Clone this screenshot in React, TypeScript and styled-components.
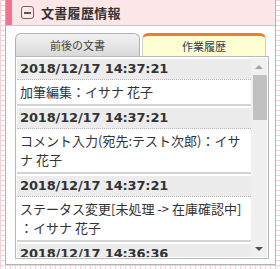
import { createGlobalStyle, styled } from "styled-components";

const GlobalStyle = createGlobalStyle`
  html, body {
    margin: 0;
    padding: 0;
  }
  body {
    padding-left: 5px;
    width: 280px;
    height: 269px;
    box-sizing: border-box;
    overflow: hidden;
    background-color: #fff;
    background-image:
      linear-gradient(to right, #f7cfd7 1px, transparent 1px),
      linear-gradient(to bottom, #f7cfd7 1px, transparent 1px);
    background-size: 5px 5px;
    font-family: "DejaVu Sans", "Noto Sans CJK JP", sans-serif;
    color: #333;
  }
`;

const Panel = styled.div`
  box-sizing: border-box;
  width: 271px;
  height: 265px;
  background: #fff;
  border: 1px solid #b4b4b4;
  border-top: 0;
  display: flex;
  flex-direction: column;
`;

const Header = styled.div`
  display: flex;
  align-items: center;
  height: 25px;
  background: #fde6e7;
  border-bottom: 1px solid #c8c8c8;
`;

const Bar = styled.div`
  align-self: stretch;
  width: 6px;
  background: #f2728f;
`;

const ToggleIcon = styled.span`
  box-sizing: border-box;
  width: 13px;
  height: 13px;
  margin-left: 9px;
  border: 1px solid #666;
  border-radius: 3px;
  display: flex;
  align-items: center;
  justify-content: center;

  &::after {
    content: "";
    width: 7px;
    height: 2px;
    background: #555;
  }
`;

const Title = styled.h2`
  margin: 0 0 0 7px;
  font-family: "Noto Sans CJK JP", sans-serif;
  font-size: 13px;
  font-weight: bold;
  letter-spacing: 0.3px;
  color: #333;
`;

const Body = styled.div`
  flex: 1;
  min-height: 0;
  display: flex;
  flex-direction: column;
  padding: 7px 6px 5px 9px;
`;

const Tabs = styled.div`
  display: flex;
  gap: 2px;
  height: 23px;
`;

const Tab = styled.div<{ $active?: boolean }>`
  box-sizing: border-box;
  width: ${(p) => (p.$active ? 124 : 125)}px;
  display: flex;
  align-items: center;
  justify-content: center;
  font-family: "Noto Sans CJK JP", sans-serif;
  font-size: 11px;
  border-radius: 6px 6px 0 0;
  border: 1px solid ${(p) => (p.$active ? "#d0d0c0" : "#b0b0b0")};
  border-bottom: 0;
  border-top: ${(p) => (p.$active ? "3px solid #f27a32" : "1px solid #b0b0b0")};
  background: ${(p) =>
    p.$active ? "#fffed2" : "linear-gradient(#f2f2f2, #d9d9d9)"};
  color: ${(p) => (p.$active ? "#2f3f55" : "#444")};
`;

const Box = styled.div`
  flex: 1;
  min-height: 0;
  display: flex;
  border: 1px solid #b8b8b8;
  padding: 1px;
  background: #fff;
`;

const List = styled.div`
  flex: 1;
  min-width: 0;
  overflow: hidden;
  padding-top: 1px;
`;

const Entry = styled.div`
  border-bottom: 2px solid #d4d4d4;
  margin-bottom: 2px;
`;

const Stamp = styled.div`
  height: 20px;
  line-height: 20px;
  padding-left: 3px;
  background: #ececec;
  border-bottom: 1px dotted #b8b8b8;
  font-size: 13px;
  font-weight: bold;
  letter-spacing: -0.15px;
  color: #333;
`;

const Note = styled.div`
  padding: 2px 2px 3px 3px;
  line-height: 19px;
  font-family: "Noto Sans CJK JP", sans-serif;
  font-size: 13px;
  line-break: anywhere;
  color: #333;
`;

const Scrollbar = styled.div`
  width: 16px;
  display: flex;
  flex-direction: column;
  background: #f0f0f0;
`;

const Arrow = styled.div<{ $down?: boolean }>`
  height: 17px;
  display: flex;
  align-items: center;
  justify-content: center;

  &::after {
    content: "";
    border-left: 4px solid transparent;
    border-right: 4px solid transparent;
    ${(p) =>
      p.$down
        ? "border-top: 4px solid #505050;"
        : "border-bottom: 4px solid #a3a3a3;"}
  }
`;

const Track = styled.div`
  flex: 1;
  padding: 0 0 0 2px;
`;

const Thumb = styled.div`
  height: 45px;
  background: #c1c1c1;
`;

const entries = [
  { at: "2018/12/17 14:37:21", text: "加筆編集：イサナ 花子" },
  { at: "2018/12/17 14:37:21", text: "コメント入力(宛先:テスト次郎)：イサナ 花子" },
  { at: "2018/12/17 14:37:21", text: "ステータス変更[未処理 -> 在庫確認中]：イサナ 花子" },
  { at: "2018/12/17 14:36:36", text: "ステータス変更[新規 -> 未処理]：イサナ 花子" },
];

const App = () => {
  return (
    <>
      <GlobalStyle />
      <Panel>
        <Header>
          <Bar />
          <ToggleIcon />
          <Title>文書履歴情報</Title>
        </Header>
        <Body>
          <Tabs>
            <Tab>前後の文書</Tab>
            <Tab $active>作業履歴</Tab>
          </Tabs>
          <Box>
            <List>
              {entries.map((e, i) => (
                <Entry key={i}>
                  <Stamp>{e.at}</Stamp>
                  <Note>{e.text}</Note>
                </Entry>
              ))}
            </List>
            <Scrollbar>
              <Arrow />
              <Track>
                <Thumb />
              </Track>
              <Arrow $down />
            </Scrollbar>
          </Box>
        </Body>
      </Panel>
    </>
  );
};

export default App;
